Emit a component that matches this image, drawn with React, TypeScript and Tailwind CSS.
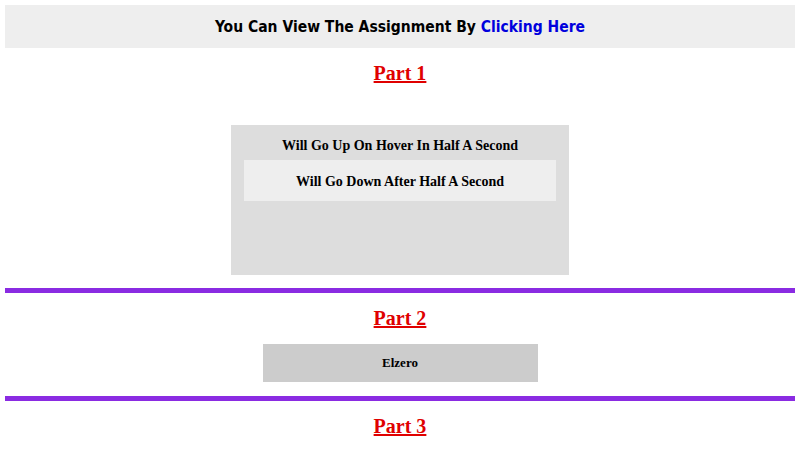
export default function App() {
  const heading = "text-center text-[20px] leading-[24px] font-bold underline text-[#e00000] decoration-[#e00000]";
  return (
    <div className="p-[5px] bg-white min-h-[450px]" style={{ fontFamily: '"Liberation Serif", serif' }}>
      <div className="h-[43px] bg-[#eeeeee] flex items-center justify-center pt-[3px]">
        <span className="text-[15.5px] font-bold text-black" style={{ fontFamily: '"DejaVu Sans Condensed", "DejaVu Sans", sans-serif' }}>
          You Can View The Assignment By <span className="text-[#0000dd]">Clicking Here</span>
        </span>
      </div>
      <h2 className={`${heading} mt-[13px]`}>Part 1</h2>
      <div className="mx-auto mt-[40px] w-[338px] h-[150px] bg-[#dddddd] pt-[12px] px-[13px]">
        <div className="text-center text-[14px] leading-[17px] font-bold text-black">Will Go Up On Hover In Half A Second</div>
        <div className="mt-[6px] h-[41px] bg-[#eeeeee] flex items-center justify-center text-[14px] font-bold text-black pt-[1px]">
          Will Go Down After Half A Second
        </div>
      </div>
      <div className="mt-[13px] h-[5px] bg-[#8a2be2]" />
      <h2 className={`${heading} mt-[13px]`}>Part 2</h2>
      <div className="mx-auto mt-[14px] w-[275px] h-[38px] bg-[#cccccc] flex items-center justify-center text-[13px] font-bold text-black">
        Elzero
      </div>
      <div className="mt-[14px] h-[5px] bg-[#8a2be2]" />
      <h2 className={`${heading} mt-[13px]`}>Part 3</h2>
    </div>
  );
}
